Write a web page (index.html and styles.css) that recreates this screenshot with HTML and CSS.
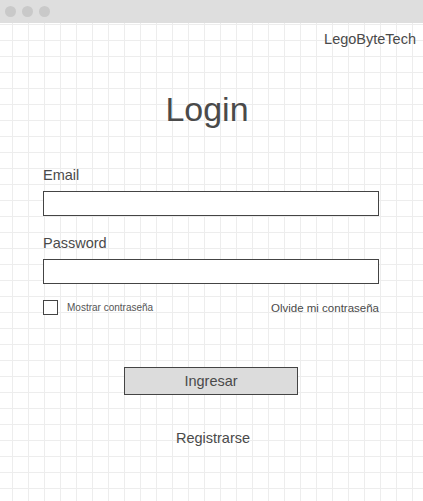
FILE: index.html
```html
<!DOCTYPE html>
<html lang="es">
<head>
<meta charset="utf-8">
<title>Login</title>
<link rel="stylesheet" href="styles.css">
</head>
<body>
<div class="titlebar">
  <span class="dot"></span><span class="dot"></span><span class="dot"></span>
</div>
<main class="page">
  <div class="brand">LegoByteTech</div>
  <h1 class="title">Login</h1>
  <form class="form">
    <label class="label">Email</label>
    <div class="input"></div>
    <label class="label label-pass">Password</label>
    <div class="input"></div>
    <div class="options">
      <span class="check"><span class="box"></span><span class="check-text">Mostrar contraseña</span></span>
      <span class="forgot">Olvide mi contraseña</span>
    </div>
    <div class="actions">
      <div class="button">Ingresar</div>
      <div class="register">Registrarse</div>
    </div>
  </form>
</main>
</body>
</html>
```
FILE: styles.css
```css
html, body {
  margin: 0;
  padding: 0;
}
body {
  width: 423px;
  height: 501px;
  overflow: hidden;
  font-family: "Liberation Sans", Arial, sans-serif;
  color: #4a4a4a;
  background-color: #fff;
  background-image:
    linear-gradient(to right, #ededed 1px, transparent 1px),
    linear-gradient(to bottom, #ededed 1px, transparent 1px);
  background-size: 16px 16px;
  background-position: 12px 8px;
}
.titlebar {
  height: 23px;
  background: #dedede;
  display: flex;
  align-items: center;
  gap: 6px;
  padding-left: 5px;
}
.dot {
  width: 11px;
  height: 11px;
  border-radius: 50%;
  background: #c9c9c9;
}
.page {
  display: flex;
  flex-direction: column;
}
.brand {
  align-self: flex-end;
  margin: 8px 7px 0 0;
  font-size: 14.5px;
  line-height: 16px;
}
.title {
  margin: 43px 0 0;
  padding-right: 9px;
  text-align: center;
  font-weight: normal;
  font-size: 34px;
  line-height: 38px;
  color: #4a4a4a;
}
.form {
  display: flex;
  flex-direction: column;
  padding: 0 44px 0 43px;
  margin-top: 39px;
}
.label {
  font-size: 14.5px;
  line-height: 17px;
}
.label-pass {
  margin-top: 19px;
}
.input {
  margin-top: 7px;
  height: 23px;
  border: 1px solid #444;
  background: #fff;
}
.options {
  margin-top: 16px;
  display: flex;
  justify-content: space-between;
  align-items: center;
}
.check {
  display: flex;
  align-items: center;
  gap: 9px;
}
.box {
  width: 13px;
  height: 13px;
  border: 1px solid #444;
  background: #fff;
}
.check-text {
  font-size: 10px;
  color: #555;
}
.forgot {
  font-size: 11.5px;
}
.actions {
  display: flex;
  flex-direction: column;
  align-items: center;
  margin-top: 52px;
}
.button {
  width: 172px;
  height: 26px;
  line-height: 26px;
  text-align: center;
  border: 1px solid #444;
  background: #dcdcdc;
  font-size: 14.5px;
}
.register {
  margin-top: 35px;
  font-size: 14.5px;
  padding-left: 4px;
}
```
